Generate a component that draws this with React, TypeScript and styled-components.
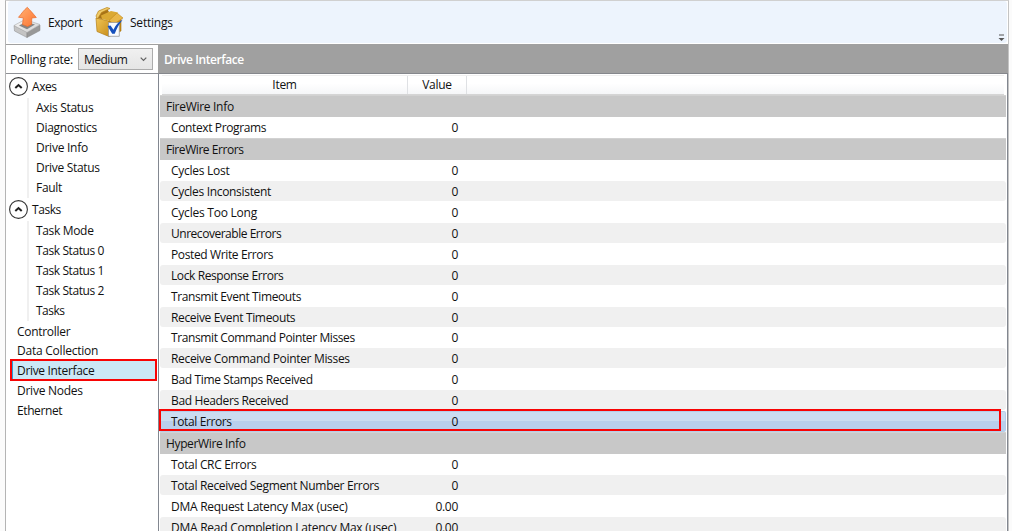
import React from "react";
import styled, { createGlobalStyle, css } from "styled-components";

const GlobalStyle = createGlobalStyle`
  * { box-sizing: border-box; }
  body {
    margin: 0;
    background: #fbfbfb;
    color: #111;
    font: 12px/16px "Open Sans", "Noto Sans", sans-serif;
    overflow: hidden;
  }
`;

const Window = styled.div`
  width: 1004px;
  height: 531px;
  margin-left: 5px;
  display: flex;
  flex-direction: column;
  background: #fff;
  border-left: 1px solid #b4b4b4;
  border-right: 1px solid #c4c4c4;
  border-top: 1px solid #d0d0d0;
  overflow: hidden;
`;

const Toolbar = styled.header`
  flex: none;
  height: 42px;
  margin: 0 1px 1px 2px;
  padding: 3px 0 0 2px;
  display: flex;
  justify-content: flex-start;
  background: #edf4fd;
  border-radius: 3px;
`;

const ToolButton = styled.div<{ $width: number }>`
  width: ${(p) => p.$width}px;
  height: 36px;
  display: flex;
  align-items: center;
  svg { flex: none; margin-right: 2px; }
  span { padding-top: 2px; }
`;

const Overflow = styled.svg`
  margin: 30px 2px 0 auto;
`;

const Label = styled.span<{ $fit?: number }>`
  white-space: nowrap;
  letter-spacing: ${(p) => p.$fit ?? -0.35}px;
`;

const Body = styled.div`
  flex: 1;
  min-height: 0;
  display: flex;
`;

const Sidebar = styled.nav`
  width: 152px;
  flex: none;
  display: flex;
  flex-direction: column;
`;

const Polling = styled.div`
  height: 30px;
  flex: none;
  display: flex;
  align-items: center;
  padding-left: 4px;
  border-top: 1px solid #a0a0a0;
  border-bottom: 1px solid #8e9095;
  span { padding-top: 2px; }
`;

const Select = styled.div`
  width: 75px;
  height: 22px;
  margin-left: auto;
  margin-right: 5px;
  padding: 0 5px 0 5px;
  display: flex;
  align-items: center;
  justify-content: space-between;
  border: 1px solid #acacac;
  background: linear-gradient(#f0f0f0, #e5e5e5);
`;

const Tree = styled.div`
  flex: 1;
  padding-top: 2px;
`;

const GroupHead = styled.div`
  height: 22px;
  display: flex;
  align-items: center;
  padding-left: 3px;
  svg { margin-right: 3px; flex: none; }
`;

const Children = styled.div`
  margin: 0 0 1px 21px;
  border-left: 2px solid #f0f0f0;
`;

const Leaf = styled.div`
  height: 20px;
  padding: 2px 0 0 7px;
`;

const Page = styled.div<{ $selected?: boolean; $height: number }>`
  height: ${(p) => p.$height}px;
  padding: 2px 0 0 11px;
  ${(p) =>
    p.$selected &&
    css`
      height: 22px;
      margin: -2px 1px 0 4px;
      padding: 2px 0 0 5px;
      border: 2px solid #f80404;
      box-shadow: inset 1px 0 #26a0da;
      background: #cbe8f6;
    `}
`;

const Main = styled.main`
  flex: 1;
  min-width: 0;
  display: flex;
  flex-direction: column;
`;

const Title = styled.h1`
  height: 30px;
  flex: none;
  margin: 0;
  padding: 8px 0 0 6px;
  font-size: 12px;
  line-height: 16px;
  font-weight: 600;
  color: #fff;
  background: #a0a0a0;
  border-bottom: 1px solid #85878c;
`;

const Grid = styled.section`
  flex: 1;
  min-height: 0;
  padding: 1px 1px 0 1px;
  border-left: 1px solid #828790;
  border-right: 1px solid #828790;
  overflow: hidden;
`;

const ColumnHeads = styled.div`
  height: 20px;
  margin: 0 2px 0 2px;
  display: flex;
  text-align: center;
  background: linear-gradient(#fff 40%, #f5f6f8);
  border-top: 1px solid #f0f0f0;
  border-bottom: 1px solid #d5d5d5;
`;

const ColumnHead = styled.div<{ $width: number }>`
  width: ${(p) => p.$width}px;
  padding-top: 1px;
  border-right: 1px solid #dfe1e4;
`;

const Category = styled.div`
  height: 22px;
  padding: 3px 0 0 6px;
  background: #c8c8c8;
  border-top: 1px solid #d2d2d2;
  line-height: 15px;
`;

const Row = styled.div<{ $short?: boolean; $shade?: boolean }>`
  height: ${(p) => (p.$short ? 19 : 20)}px;
  margin-bottom: 1px;
  display: flex;
  align-items: flex-start;
  padding: ${(p) => (p.$short ? 2 : 3)}px 0 0 11px;
  border-radius: 3px;
  background: ${(p) => (p.$shade ? "#f0f0f0" : "transparent")};
`;

const SelectedRow = styled.div`
  height: 21px;
  margin-left: -1px;
  border-radius: 2px;
  background: linear-gradient(#cbdcf0 50%, #b9cfec 50%);
  border: 1px solid #b5cdea;
  border-left: none;
`;

const Callout = styled.div`
  width: 842px;
  height: 22px;
  margin-top: -3px;
  border: 2px solid #f80404;
  display: flex;
  padding: 3px 0 0 10px;
`;

const Cell = styled.div`
  width: 230px;
`;

const NumberCell = styled.div`
  width: 57px;
  text-align: right;
  letter-spacing: -0.3px;
`;

const ExportIcon = () => (
  <svg width="36" height="36" viewBox="0 0 36 36">
    <defs>
      <linearGradient id="arrow" x1="0" y1="0" x2="1" y2="1">
        <stop offset="0" stopColor="#ffb273" />
        <stop offset=".5" stopColor="#ff9252" />
        <stop offset="1" stopColor="#f97431" />
      </linearGradient>
      <linearGradient id="tray" x1="0" y1="0" x2="1" y2="1">
        <stop offset="0" stopColor="#fafafa" />
        <stop offset="1" stopColor="#cecece" />
      </linearGradient>
    </defs>
    <path d="M4 21.500 17 28v5.500L4.500 27Z" fill="#c4c4c4" stroke="#8b8b8b" strokeWidth=".5" />
    <path d="m17 28 13-7v5.500l-13 7Z" fill="#989898" stroke="#858585" strokeWidth=".5" />
    <path d="m4 21.500 11-6 15 5-13 8Z" fill="url(#tray)" stroke="#aaa" strokeWidth=".6" />
    <path d="m9 21.500 7-3.500 9 2.500-8 4.800Z" fill="#858585" />
    <path
      d="M17.300 3.300c2.500 2.600 5.700 6.200 9 10.200l-4.500.5-.3 6.500-4 2-5-2 .8-6.700-4.800-.5c3-3.500 5.500-7.500 8.800-10Z"
      fill="url(#arrow)"
      stroke="#ea6828"
      strokeWidth=".7"
    />
  </svg>
);

const SettingsIcon = () => (
  <svg width="36" height="36" viewBox="0 0 36 36">
    <defs>
      <linearGradient id="box" x1="0" y1="0" x2="1" y2="1">
        <stop offset="0" stopColor="#f0c455" />
        <stop offset="1" stopColor="#c98f1c" />
      </linearGradient>
    </defs>
    <path d="m4 14 13 3v15.500L5 27.500Z" fill="url(#box)" stroke="#b37d14" strokeWidth=".7" />
    <path d="m17 17 12-4v14l-12 5.500Z" fill="#c48b17" stroke="#a8720e" strokeWidth=".6" />
    <path d="M5 14 7.500 7l7.500-2.500L17 8l-7 7Z" fill="#a87316" />
    <path d="m4 12 2.500-5L15 3.500l3 1-8.500 4-4 6.500Z" fill="#f0cb6a" stroke="#b98316" strokeWidth=".7" />
    <path d="m9 11.500 10-4.500 7 1.500-8 8.500-8-2Z" fill="#dba933" />
    <path d="m17 16.500 8-7.500 6 5-9 6Z" fill="#e9b748" stroke="#bd8619" strokeWidth=".6" />
    <path d="M16.500 18.500h10.800v13.800H16.500Z" fill="#f8fbff" stroke="#999" strokeWidth=".8" />
    <path d="m15.500 22 3-.6 3 4.300c2-4.500 5-8 9.200-10.200-3.500 4.500-6 9-8 14.200h-2.500Z" fill="#1550bd" />
  </svg>
);

const Chevron = () => (
  <svg width="20" height="20" viewBox="0 0 20 20" fill="none">
    <circle cx="9.500" cy="9.500" r="8.900" stroke="#333" strokeWidth="1.100" fill="#fff" />
    <path d="m6.300 11 3.200-3 3.200 3" stroke="#222" strokeWidth="2" />
  </svg>
);

interface Entry {
  name: string;
  fit: number;
  value?: string;
}

const context: Entry[] = [{ name: "Context Programs", fit: -0.37 }];

const errors: Entry[] = [
  { name: "Cycles Lost", fit: -0.27 },
  { name: "Cycles Inconsistent", fit: -0.32 },
  { name: "Cycles Too Long", fit: -0.23 },
  { name: "Unrecoverable Errors", fit: -0.47 },
  { name: "Posted Write Errors", fit: -0.37 },
  { name: "Lock Response Errors", fit: -0.4 },
  { name: "Transmit Event Timeouts", fit: -0.39 },
  { name: "Receive Event Timeouts", fit: -0.34 },
  { name: "Transmit Command Pointer Misses", fit: -0.39 },
  { name: "Receive Command Pointer Misses", fit: -0.33 },
  { name: "Bad Time Stamps Received", fit: -0.35 },
  { name: "Bad Headers Received", fit: -0.37 },
];

const hyper: Entry[] = [
  { name: "Total CRC Errors", fit: -0.34 },
  { name: "Total Received Segment Number Errors", fit: -0.33 },
  { name: "DMA Request Latency Max (usec)", fit: -0.27, value: "0.00" },
  { name: "DMA Read Completion Latency Max (usec)", fit: -0.26, value: "0.00" },
];

const axes: Entry[] = [
  { name: "Axis Status", fit: -0.3 },
  { name: "Diagnostics", fit: -0.27 },
  { name: "Drive Info", fit: -0.25 },
  { name: "Drive Status", fit: -0.3 },
  { name: "Fault", fit: -0.3 },
];

const tasks: Entry[] = [
  { name: "Task Mode", fit: -0.33 },
  { name: "Task Status 0", fit: -0.4 },
  { name: "Task Status 1", fit: -0.4 },
  { name: "Task Status 2", fit: -0.4 },
  { name: "Tasks", fit: -0.5 },
];

const Rows = ({ items }: { items: Entry[] }) => (
  <>
    {items.map(({ name, fit, value = "0" }, i) => (
      <Row key={name} $shade={i % 2 === 1} $short={i === 8}>
        <Cell><Label $fit={fit}>{name}</Label></Cell>
        <NumberCell>{value}</NumberCell>
      </Row>
    ))}
  </>
);

const Group = ({ name, items }: { name: string; items: Entry[] }) => (
  <>
    <GroupHead><Chevron /><Label $fit={-0.45}>{name}</Label></GroupHead>
    <Children>
      {items.map((item) => (
        <Leaf key={item.name}><Label $fit={item.fit}>{item.name}</Label></Leaf>
      ))}
    </Children>
  </>
);

export default function App() {
  return (
    <>
      <GlobalStyle />
      <Window>
        <Toolbar>
          <ToolButton $width={82}><ExportIcon /><Label $fit={-0.4}>Export</Label></ToolButton>
          <ToolButton $width={90}><SettingsIcon /><Label $fit={-0.22}>Settings</Label></ToolButton>
          <Overflow width="7" height="8" viewBox="0 0 7 8">
            <path d="M1 1h5" stroke="#555" />
            <path d="M.5 4h6L3.500 7Z" fill="#555" />
          </Overflow>
        </Toolbar>
        <Body>
          <Sidebar>
            <Polling>
              <Label $fit={-0.25}>Polling rate:</Label>
              <Select>
                <Label $fit={-0.5}>Medium</Label>
                <svg width="7" height="5" viewBox="0 0 7 5"><path d="m.7.7 2.800 2.800L6.300.7" fill="none" stroke="#606060" strokeWidth="1.200" /></svg>
              </Select>
            </Polling>
            <Tree>
              <Group name="Axes" items={axes} />
              <Group name="Tasks" items={tasks} />
              <Page $height={19}><Label $fit={-0.3}>Controller</Label></Page>
              <Page $height={20}><Label $fit={-0.23}>Data Collection</Label></Page>
              <Page $height={20} $selected><Label $fit={-0.33}>Drive Interface</Label></Page>
              <Page $height={20}><Label $fit={-0.25}>Drive Nodes</Label></Page>
              <Page $height={20}><Label $fit={-0.4}>Ethernet</Label></Page>
            </Tree>
          </Sidebar>
          <Main>
            <Title><Label $fit={-0.42}>Drive Interface</Label></Title>
            <Grid>
              <ColumnHeads>
                <ColumnHead $width={246}><Label $fit={-0.3}>Item</Label></ColumnHead>
                <ColumnHead $width={59}><Label $fit={-0.3}>Value</Label></ColumnHead>
              </ColumnHeads>
              <Category><Label $fit={-0.3}>FireWire Info</Label></Category>
              <Rows items={context} />
              <Category><Label $fit={-0.43}>FireWire Errors</Label></Category>
              <Rows items={errors} />
              <SelectedRow>
                <Callout>
                  <Cell><Label $fit={-0.38}>Total Errors</Label></Cell>
                  <NumberCell>0</NumberCell>
                </Callout>
              </SelectedRow>
              <Category><Label $fit={-0.36}>HyperWire Info</Label></Category>
              <Rows items={hyper} />
            </Grid>
          </Main>
        </Body>
      </Window>
    </>
  );
}
